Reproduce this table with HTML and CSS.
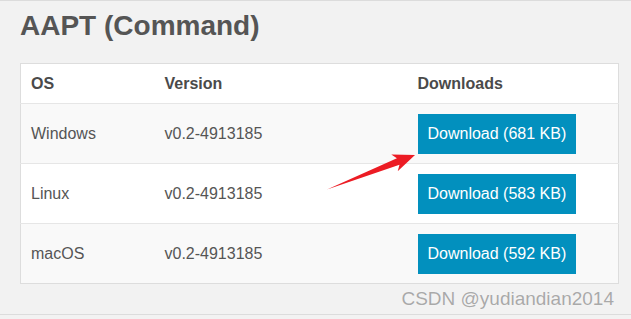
FILE: index.html
```html
<!DOCTYPE html>
<html>
<head>
<meta charset="utf-8">
<link rel="stylesheet" href="styles.css">
</head>
<body>
<div class="page">
  <h1 class="title">AAPT (Command)</h1>
  <table class="dl-table">
    <colgroup>
      <col class="c-os">
      <col class="c-ver">
      <col class="c-dl">
    </colgroup>
    <thead>
      <tr><th>OS</th><th>Version</th><th>Downloads</th></tr>
    </thead>
    <tbody>
      <tr class="odd"><td>Windows</td><td>v0.2-4913185</td><td><span class="btn">Download (681 KB)</span></td></tr>
      <tr><td>Linux</td><td>v0.2-4913185</td><td><span class="btn">Download (583 KB)</span></td></tr>
      <tr class="odd"><td>macOS</td><td>v0.2-4913185</td><td><span class="btn">Download (592 KB)</span></td></tr>
    </tbody>
  </table>
  <div class="watermark">CSDN @yudiandian2014</div>
  <svg class="arrow" width="631" height="319" viewBox="0 0 631 319">
    <polygon points="327,189.5 396.9,158.2 391.3,154.5 415,155 397.7,171.3 399.5,164.8" fill="#ec1c24"/>
  </svg>
</div>
</body>
</html>
```
FILE: styles.css
```css
html, body {
  margin: 0;
  padding: 0;
}
body {
  background: #f2f2f2;
  font-family: "Liberation Sans", Arial, sans-serif;
  color: #555;
}
.page {
  position: relative;
  box-sizing: border-box;
  height: 315px;
  border-top: 1px solid #dcdcdc;
  border-bottom: 1px solid #dcdcdc;
  padding: 0 13px 0 20px;
}
.title {
  margin: 9px 0 21px;
  font-size: 28px;
  line-height: 32px;
  font-weight: bold;
  color: #555;
}
.dl-table {
  width: 598px;
  table-layout: fixed;
  border-collapse: collapse;
  border: 1px solid #dddddd;
  background: #fff;
  font-size: 16px;
}
.c-os { width: 134px; }
.c-ver { width: 253px; }
.c-dl { width: 211px; }
.dl-table th {
  height: 39px;
  padding: 0 10px;
  text-align: left;
  font-weight: bold;
  color: #4a4a4a;
  border-bottom: 1px solid #e6e6e6;
  vertical-align: middle;
}
.dl-table td {
  height: 59px;
  padding: 0 10px;
  border-top: 1px solid #e6e6e6;
  vertical-align: middle;
}
.dl-table tr.odd td {
  background: #f9f9f9;
}
.btn {
  display: inline-block;
  height: 40px;
  line-height: 40px;
  padding: 0 10px;
  margin-top: 1px;
  background: #0290be;
  color: #fff;
  white-space: nowrap;
}
.watermark {
  margin-top: 4px;
  text-align: right;
  padding-right: 4px;
  font-size: 19px;
  line-height: 22px;
  color: #a9a9a9;
  text-shadow: 0 0 1px #fff;
}
.arrow {
  position: absolute;
  left: 0;
  top: -1px;
  pointer-events: none;
}
```
